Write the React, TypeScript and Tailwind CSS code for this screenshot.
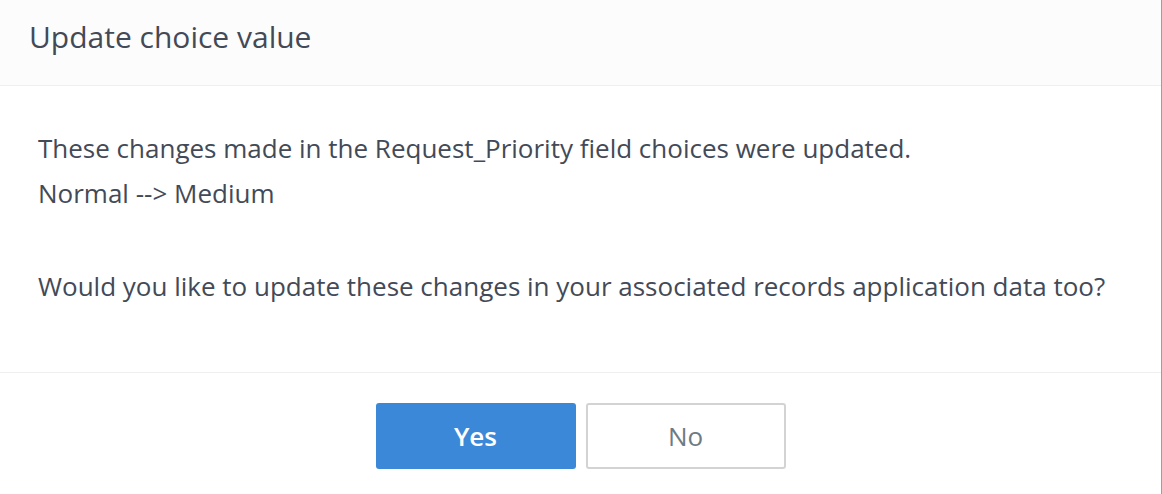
export default function App() {
  return (
    <div
      className="flex h-[494px] w-[1162px] flex-col border-r border-[#9e9e9e] bg-white text-[#434a57]"
      style={{ fontFamily: "'Open Sans', Lato, sans-serif" }}
    >
      <div className="h-[86px] border-b border-[#efefef] bg-[#fcfcfc] pl-[29px] pt-[22px]">
        <h2 className="text-[30px] leading-none">Update choice value</h2>
      </div>
      <div className="h-[287px] border-b border-[#efefef] pl-[38px] pt-[40px] text-[26px] leading-[45px]">
        <p>These changes made in the Request_Priority field choices were updated.</p>
        <p>Normal --&gt; Medium</p>
        <p className="mt-[48px]">
          Would you like to update these changes in your associated records application data too?
        </p>
      </div>
      <div className="flex flex-1 items-start justify-center gap-[10px] pt-[30px] text-[26px] font-semibold">
        <button className="h-[66px] w-[200px] rounded-[3px] bg-[#3b88d9] text-white">Yes</button>
        <button className="h-[66px] w-[200px] rounded-[3px] border-2 border-[#d3d3d3] bg-white font-normal text-[#6e7b84]">
          No
        </button>
      </div>
    </div>
  );
}
